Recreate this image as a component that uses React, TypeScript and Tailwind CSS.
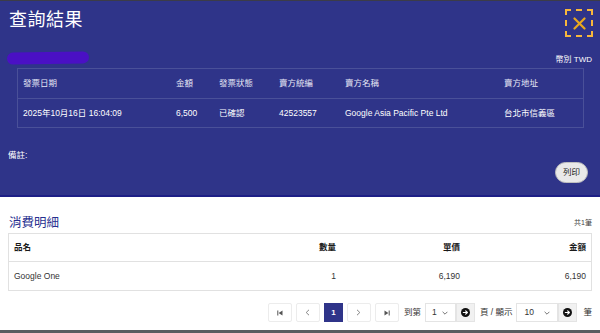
import type { ReactNode } from "react";

const font = { fontFamily: '"Liberation Sans", "Noto Sans CJK TC", sans-serif' };

function PageBtn({ children, active }: { children: ReactNode; active?: boolean }) {
  return (
    <div
      className={
        active
          ? "h-[19px] w-[19px] flex items-center justify-center bg-[#2f3489] text-white text-[8px] font-bold border border-[#2f3489]"
          : "h-[19px] w-[24px] flex items-center justify-center bg-white border border-[#ececec] rounded-[2px] text-[#777]"
      }
    >
      {children}
    </div>
  );
}

function GoBtn() {
  return (
    <div className="h-[19px] w-[19px] flex items-center justify-center bg-[#f1f1f1] border border-[#e4e4e4]">
      <svg width="9" height="9" viewBox="0 0 10 10">
        <circle cx="5" cy="5" r="5" fill="#111" />
        <path d="M2.6 5h4.4M5.2 3.1 7.1 5 5.2 6.9" stroke="#fff" strokeWidth="1.3" fill="none" strokeLinecap="round" strokeLinejoin="round" />
      </svg>
    </div>
  );
}

function Chevron() {
  return (
    <svg width="6" height="4" viewBox="0 0 6 4" className="ml-[5px]">
      <path d="M0.6 0.8 3 3.2 5.4 0.8" stroke="#666" strokeWidth="0.9" fill="none" />
    </svg>
  );
}

export default function App() {
  return (
    <div className="w-[600px] h-[333px] overflow-hidden flex flex-col bg-white" style={font}>
      {/* backdrop edge */}
      <div className="h-[1px] bg-[#3c3c48] shrink-0" />

      {/* Result header */}
      <div className="bg-[#2f3489] border-b-2 border-[#1d1f86] h-[196px] shrink-0 flex flex-col text-white">
        <div className="flex items-start justify-between pl-[9px] pr-[7px] pt-[7px]">
          <h1 className="text-[18px] leading-[24px] tracking-[0.5px]">查詢結果</h1>
          <div className="mt-[1px] h-[28px] w-[28px] border-2 border-dashed border-[#f7b73c] flex items-center justify-center">
            <svg width="13" height="13" viewBox="0 0 13 13">
              <path d="M1.5 1.5 11.5 11.5M11.5 1.5 1.5 11.5" stroke="#e8a81e" strokeWidth="2.2" strokeLinecap="round" />
            </svg>
          </div>
        </div>

        <div className="flex items-end justify-between pl-[7px] pr-[8px] mt-[15px]">
          <div className="h-[12px] w-[82px] rounded-full bg-[#4a10c4] -rotate-[1deg]" />
          <span className="text-[8px] leading-[10px] mb-[-1px]">幣別 TWD</span>
        </div>

        <div className="mx-[16px] ml-[17px] mt-[4px] border border-[#4a5099] text-[8.5px]">
          <div className="grid grid-cols-[153px_43px_60px_66px_159px_1fr] h-[30px] items-center pl-[5px] border-b border-[#4a5099] text-[#e6e7f5]">
            <span>發票日期</span>
            <span>金額</span>
            <span>發票狀態</span>
            <span>賣方統編</span>
            <span>賣方名稱</span>
            <span>賣方地址</span>
          </div>
          <div className="grid grid-cols-[153px_43px_60px_66px_159px_1fr] h-[28px] items-center pl-[5px]">
            <span>2025年10月16日 16:04:09</span>
            <span>6,500</span>
            <span>已確認</span>
            <span>42523557</span>
            <span>Google Asia Pacific Pte Ltd</span>
            <span>台北市信義區</span>
          </div>
        </div>

        <div className="pl-[8px] mt-[22px] text-[8.5px] leading-[10px]">備註:</div>

        <div className="flex justify-end pr-[12px] mt-[2px]">
          <button className="h-[21px] w-[33px] rounded-full bg-[#e9e9e9] text-[#222] text-[8.5px] border border-[#bfbfbf]">
            列印
          </button>
        </div>
      </div>

      {/* Detail list */}
      <div className="flex-1 flex flex-col px-[8px] pt-[18px]">
        <div className="flex items-end justify-between pl-[1px]">
          <h2 className="text-[12.5px] leading-[16px] text-[#27308f]">消費明細</h2>
          <span className="text-[7px] text-[#444] mb-[3px]">共1筆</span>
        </div>

        <div className="mt-[2px] border border-[#e1e1e1] text-[8.5px] text-[#333]">
          <div className="grid grid-cols-[1fr_124px_124px_126px] h-[28px] items-center px-[5px] border-b border-[#e1e1e1] font-semibold text-[#1a1a1a]">
            <span>品名</span>
            <span className="text-right">數量</span>
            <span className="text-right">單價</span>
            <span className="text-right">金額</span>
          </div>
          <div className="grid grid-cols-[1fr_124px_124px_126px] h-[28px] items-center px-[5px]">
            <span>Google One</span>
            <span className="text-right">1</span>
            <span className="text-right">6,190</span>
            <span className="text-right">6,190</span>
          </div>
        </div>

        <div className="flex items-center justify-end gap-[4px] mt-[12px] text-[8.5px] text-[#333] pr-0">
          <PageBtn>
            <svg width="6" height="6" viewBox="0 0 6 6">
              <path d="M0.8 0.5v5" stroke="#555" strokeWidth="1" />
              <path d="M5.5 0.5 1.6 3 5.5 5.5Z" fill="#555" />
            </svg>
          </PageBtn>
          <PageBtn>
            <svg width="5" height="7" viewBox="0 0 5 7">
              <path d="M4 0.8 1.2 3.5 4 6.2" stroke="#777" strokeWidth="0.9" fill="none" />
            </svg>
          </PageBtn>
          <PageBtn active>1</PageBtn>
          <PageBtn>
            <svg width="5" height="7" viewBox="0 0 5 7">
              <path d="M1 0.8 3.8 3.5 1 6.2" stroke="#777" strokeWidth="0.9" fill="none" />
            </svg>
          </PageBtn>
          <PageBtn>
            <svg width="6" height="6" viewBox="0 0 6 6">
              <path d="M0.5 0.5 4.4 3 0.5 5.5Z" fill="#555" />
              <path d="M5.2 0.5v5" stroke="#555" strokeWidth="1" />
            </svg>
          </PageBtn>
          <span className="ml-[1px]">到第</span>
          <div className="flex">
            <div className="h-[19px] w-[31px] flex items-center pl-[6px] bg-white border border-[#e4e4e4]">
              1<Chevron />
            </div>
            <GoBtn />
          </div>
          <span className="ml-[1px]">頁 / 顯示</span>
          <div className="flex">
            <div className="h-[19px] w-[42px] flex items-center pl-[7px] bg-white border border-[#e4e4e4]">
              10<span className="ml-[5px]"><Chevron /></span>
            </div>
            <GoBtn />
          </div>
          <span className="ml-[2px]">筆</span>
        </div>
      </div>

      <div className="h-[3px] bg-[#5a5a60] shrink-0" />
    </div>
  );
}
